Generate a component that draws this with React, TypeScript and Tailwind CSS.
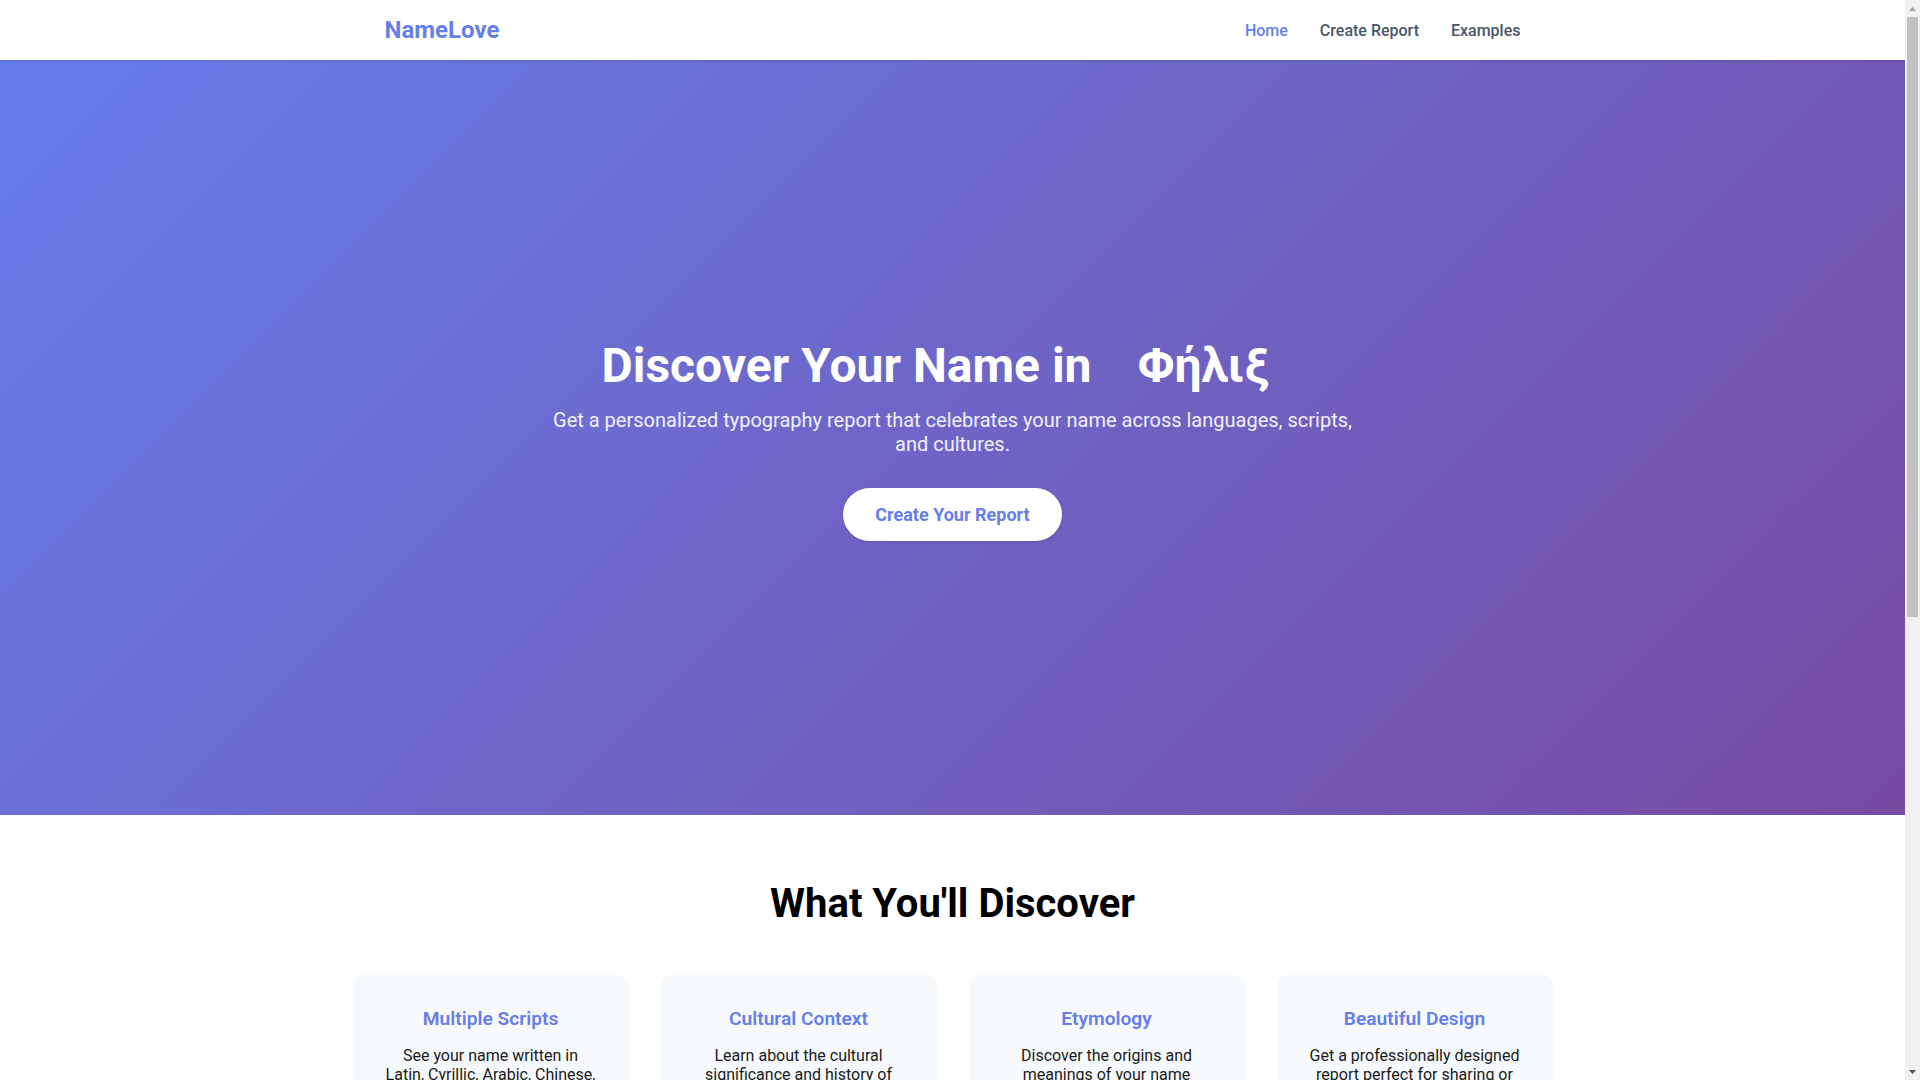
const features = [
  {
    title: 'Multiple Scripts',
    text: 'See your name written in Latin, Cyrillic, Arabic, Chinese, and many more writing systems.',
  },
  {
    title: 'Cultural Context',
    text: 'Learn about the cultural significance and history of your name around the world.',
  },
  {
    title: 'Etymology',
    text: 'Discover the origins and meanings of your name through the ages.',
  },
  {
    title: 'Beautiful Design',
    text: 'Get a professionally designed report perfect for sharing or printing.',
  },
]

const steps = [
  { title: 'Enter your name', text: 'Type your name exactly as you like to write it.' },
  { title: 'Choose your languages', text: 'Pick the scripts and cultures you want to explore.' },
  { title: 'Get your report', text: 'Download a beautiful typography report of your name.' },
]

// Window scrollbar as it appears in the screenshot
function Scrollbar() {
  return (
    <div className="fixed right-0 top-0 z-20 flex h-screen w-[15px] flex-col bg-[#f1f1f1]">
      <div className="flex h-[17px] items-center justify-center">
        <svg width="7" height="4" viewBox="0 0 7 4"><path d="M3.5 0L7 4H0z" fill="#a3a3a3" /></svg>
      </div>
      <div className="mx-[2px] h-[600px] bg-[#c1c1c1]" />
      <div className="flex-1" />
      <div className="flex h-[17px] items-center justify-center">
        <svg width="7" height="4" viewBox="0 0 7 4"><path d="M0 0h7L3.5 4z" fill="#505050" /></svg>
      </div>
    </div>
  )
}

export default function App() {
  return (
    <div className="min-h-screen bg-white font-['Roboto',sans-serif]">
      <Scrollbar />
      <div className="mr-[15px]">
        {/* Header */}
        <header className="sticky top-0 z-10 h-[60px] bg-white shadow-sm">
          <div className="mx-auto flex h-full max-w-[1200px] items-center justify-between px-8">
            <a href="#" className="text-2xl font-bold leading-[normal] text-[#667eea]">
              NameLove
            </a>
            <nav className="flex items-center gap-8 text-base font-medium leading-[normal]">
              <a href="#" className="text-[#667eea]">Home</a>
              <a href="#" className="text-[#4a5568]">Create Report</a>
              <a href="#" className="text-[#4a5568]">Examples</a>
            </nav>
          </div>
        </header>

        {/* Hero */}
        <section className="flex h-[755px] flex-col items-center justify-center bg-[linear-gradient(135deg,#667eea_0%,#764ba2_100%)] px-8 pt-[3px] text-center text-white">
          <h1 className="mb-[14px] text-5xl font-bold leading-[normal]">
            Discover Your Name in{' '}
            <span className="inline-block w-[200px] text-center">Φήλιξ</span>
          </h1>
          <p className="mb-8 max-w-[820px] text-xl leading-[normal] text-white/90">
            Get a personalized typography report that celebrates your name across languages, scripts, and cultures.
          </p>
          <button className="rounded-full bg-white px-8 py-4 text-lg font-bold leading-[normal] text-[#667eea] shadow-sm">
            Create Your Report
          </button>
        </section>

        {/* Features */}
        <section className="px-8 pb-24 pt-[65px]">
          <div className="mx-auto max-w-[1200px]">
            <h2 className="mb-12 text-center text-[40px] font-bold leading-[normal] text-black">
              What You'll Discover
            </h2>
            <div className="grid grid-cols-4 gap-8">
              {features.map((f) => (
                <div key={f.title} className="rounded-[10px] bg-[#f7fafc] p-8 text-center">
                  <h3 className="mb-4 text-[19.2px] font-semibold leading-[normal] text-[#667eea]">
                    {f.title}
                  </h3>
                  <p className="text-base leading-[normal] text-[#1a1a1a]">{f.text}</p>
                </div>
              ))}
            </div>
          </div>
        </section>

        {/* How it works */}
        <section className="bg-[#f7fafc] px-8 py-24">
          <div className="mx-auto max-w-[1200px] text-center">
            <h2 className="mb-12 text-[40px] font-bold leading-[normal] text-black">How It Works</h2>
            <div className="grid grid-cols-3 gap-8">
              {steps.map((s, i) => (
                <div key={s.title} className="flex flex-col items-center gap-4 rounded-[10px] bg-white p-8">
                  <div className="flex h-14 w-14 items-center justify-center rounded-full bg-[#667eea] text-xl font-bold text-white">
                    {i + 1}
                  </div>
                  <p className="text-lg font-semibold text-[#2d3748]">{s.title}</p>
                  <p className="text-base text-[#4a5568]">{s.text}</p>
                </div>
              ))}
            </div>
          </div>
        </section>

        {/* Footer */}
        <footer className="bg-[#2d3748] px-8 py-16 text-center text-sm text-[#cbd5e0]">
          © NameLove. Celebrate your name in every script.
        </footer>
      </div>
    </div>
  )
}
